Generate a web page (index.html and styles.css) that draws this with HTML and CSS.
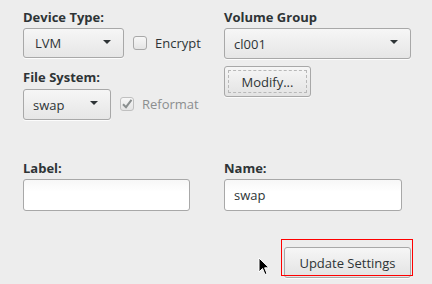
FILE: index.html
```html
<!DOCTYPE html>
<html lang="en">
<head>
<meta charset="UTF-8">
<title>Device Settings</title>
<link rel="stylesheet" href="styles.css">
</head>
<body>

<div class="panel">
  <div class="top">
    <div class="col-left">
      <div class="field-label">Device Type:</div>
      <div class="row">
        <div class="combo combo-type">LVM<span class="arrow"></span></div>
        <label class="check"><span class="box"></span>Encrypt</label>
      </div>
      <div class="field-label fs-label">File System:</div>
      <div class="row">
        <div class="combo combo-fs">swap<span class="arrow"></span></div>
        <label class="check disabled">
          <span class="box checked">
            <svg width="14" height="14" viewBox="0 0 14 14"><path d="M3 7.2 L6 10.2 L11.5 2.8" fill="none" stroke="#8a8f8f" stroke-width="2"/></svg>
          </span>Reformat</label>
      </div>
    </div>
    <div class="col-right">
      <div class="field-label">Volume Group</div>
      <div class="combo combo-vg">cl001<span class="arrow"></span></div>
      <div class="button modify"><span class="focus">Modify...</span></div>
    </div>
  </div>

  <div class="names">
    <div class="name-field">
      <div class="field-label">Label:</div>
      <div class="entry entry-label"></div>
    </div>
    <div class="name-field">
      <div class="field-label">Name:</div>
      <div class="entry entry-name">swap</div>
    </div>
  </div>

  <div class="footer">
    <div class="update-wrap">
      <div class="button update">Update Settings</div>
    </div>
  </div>
</div>

<svg class="cursor" width="12" height="19" viewBox="0 0 12 19">
  <path d="M1 1 L1 15 L4.5 11.5 L7 17.5 L9 16.6 L6.6 10.8 L11 10.8 Z" fill="#000" stroke="#fff" stroke-width="1"/>
</svg>

</body>
</html>
```

FILE: styles.css
```css
body {
  margin: 0;
  padding: 0;
  background-color: #ededed;
  font-family: "Open Sans", "DejaVu Sans", sans-serif;
  font-size: 13px;
  color: #2e3436;
  width: 432px;
  height: 284px;
  overflow: hidden;
  position: relative;
}

.panel {
  padding: 8px 0 0 23px;
}

.top {
  display: flex;
}

.col-left {
  width: 201px;
}

.col-right {
  display: flex;
  flex-direction: column;
  align-items: flex-start;
}

.field-label {
  font-weight: bold;
  height: 18px;
  line-height: 18px;
  margin-bottom: 2px;
}

.fs-label {
  margin-top: 10px;
}

.row {
  display: flex;
  align-items: center;
}

.combo {
  box-sizing: border-box;
  height: 30px;
  border: 1px solid #a8a8a8;
  border-radius: 3px;
  background: linear-gradient(#f6f6f6, #e6e6e6);
  display: flex;
  align-items: center;
  padding-left: 11px;
  position: relative;
  box-shadow: 0 1px 0 rgba(255, 255, 255, 0.8);
}

.arrow {
  position: absolute;
  right: 12px;
  top: 11px;
  width: 0;
  height: 0;
  border-left: 4.5px solid transparent;
  border-right: 4.5px solid transparent;
  border-top: 4.5px solid #2e3436;
}

.combo-type {
  width: 101px;
}

.combo-fs {
  width: 88px;
  margin-top: 1px;
}

.combo-vg {
  width: 187px;
}

.combo-fs,
.combo-vg {
  height: 31px;
  padding-left: 9px;
}

.check {
  display: flex;
  align-items: center;
  margin-left: 9px;
}

.check.disabled {
  color: #8b8e8f;
}

.box {
  box-sizing: border-box;
  width: 14px;
  height: 14px;
  border: 1px solid #a8a8a8;
  border-radius: 3px;
  background: linear-gradient(#f7f7f7, #e4e4e4);
  margin-right: 8px;
  position: relative;
}

.box svg {
  position: absolute;
  left: -1px;
  top: -1px;
}

.check.disabled .box {
  border-color: #c0c0c0;
}

.button {
  box-sizing: border-box;
  height: 31px;
  border: 1px solid #a8a8a8;
  border-radius: 3px;
  background: linear-gradient(#f6f6f6, #e3e3e3);
  display: flex;
  align-items: center;
  justify-content: center;
  box-shadow: 0 1px 0 rgba(255, 255, 255, 0.8);
}

.modify {
  width: 87px;
  margin-top: 7px;
  padding: 3px;
}

.modify .focus {
  box-sizing: border-box;
  width: 100%;
  height: 100%;
  border: 1px dashed #b8b8b8;
  display: flex;
  align-items: center;
  justify-content: center;
}

.names {
  display: flex;
  margin-top: 39px;
}

.name-field {
  width: 201px;
}

.entry {
  box-sizing: border-box;
  height: 32px;
  border: 1px solid #a8a8a8;
  border-radius: 3px;
  background: linear-gradient(#f7f7f7, #ffffff 40%);
  display: flex;
  align-items: center;
  padding-left: 9px;
}

.entry-label {
  width: 167px;
}

.entry-name {
  width: 178px;
}

.footer {
  display: flex;
  justify-content: flex-end;
  padding-right: 21px;
  margin-top: 36px;
}

.update-wrap {
  position: relative;
}

.update-wrap::after {
  content: "";
  position: absolute;
  left: -3px;
  top: -8px;
  width: 130px;
  height: 35px;
  border: 1px solid #ff0000;
}

.update {
  width: 127px;
}

.cursor {
  position: absolute;
  left: 258px;
  top: 257px;
}
```
